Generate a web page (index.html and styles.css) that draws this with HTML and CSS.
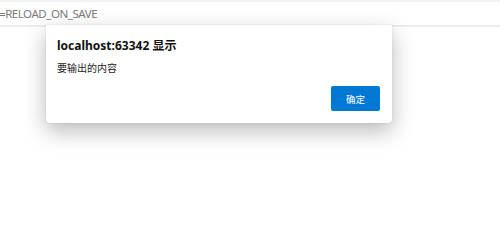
FILE: index.html
```html
<!DOCTYPE html>
<html lang="zh-CN">
<head>
<meta charset="utf-8">
<title>alert</title>
<link rel="stylesheet" href="styles.css">
</head>
<body>
<div class="chrome">
  <div class="topstrip"></div>
  <div class="addressbar"><span class="url">=RELOAD_ON_SAVE</span></div>
  <div class="divider"></div>
</div>
<div class="page"></div>
<div class="dialog" role="alertdialog">
  <div class="title">localhost:63342 显示</div>
  <div class="message">要输出的内容</div>
  <div class="actions"><button class="ok">确定</button></div>
</div>
</body>
</html>
```
FILE: styles.css
```css
html, body {
  margin: 0;
  padding: 0;
  width: 500px;
  height: 219px;
  overflow: hidden;
  background: #ffffff;
  font-family: "Noto Sans", "Noto Sans CJK SC", sans-serif;
}
.chrome {
  display: flex;
  flex-direction: column;
}
.topstrip {
  height: 2px;
  background: #f1f1f1;
}
.addressbar {
  height: 23px;
  display: flex;
  align-items: center;
  background: #ffffff;
}
.url {
  font-size: 11.5px;
  color: #7a7a7a;
  margin-left: -1px;
  letter-spacing: -0.45px;
}
.divider {
  height: 2px;
  background: #ececec;
}
.dialog {
  position: absolute;
  left: 46px;
  top: 25px;
  width: 346px;
  height: 98px;
  box-sizing: border-box;
  background: #ffffff;
  border-radius: 0 0 4px 4px;
  box-shadow: 0 8px 22px rgba(0, 0, 0, 0.28), 0 0 2px rgba(0, 0, 0, 0.12);
  padding: 13px 12px 12px 12px;
  display: flex;
  flex-direction: column;
}
.title {
  font-size: 12px;
  font-weight: 700;
  color: #111111;
  line-height: 16px;
  margin-left: -1px;
}
.message {
  font-size: 10px;
  color: #222222;
  line-height: 14px;
  margin-top: 7px;
  margin-left: -1px;
}
.actions {
  display: flex;
  justify-content: flex-end;
  margin-top: 11px;
}
.ok {
  width: 49px;
  height: 25px;
  margin: 0;
  padding: 0;
  border: none;
  border-radius: 2px;
  background: #0078d4;
  color: #ffffff;
  font-family: "Noto Sans CJK SC", sans-serif;
  font-size: 9.5px;
}
```
